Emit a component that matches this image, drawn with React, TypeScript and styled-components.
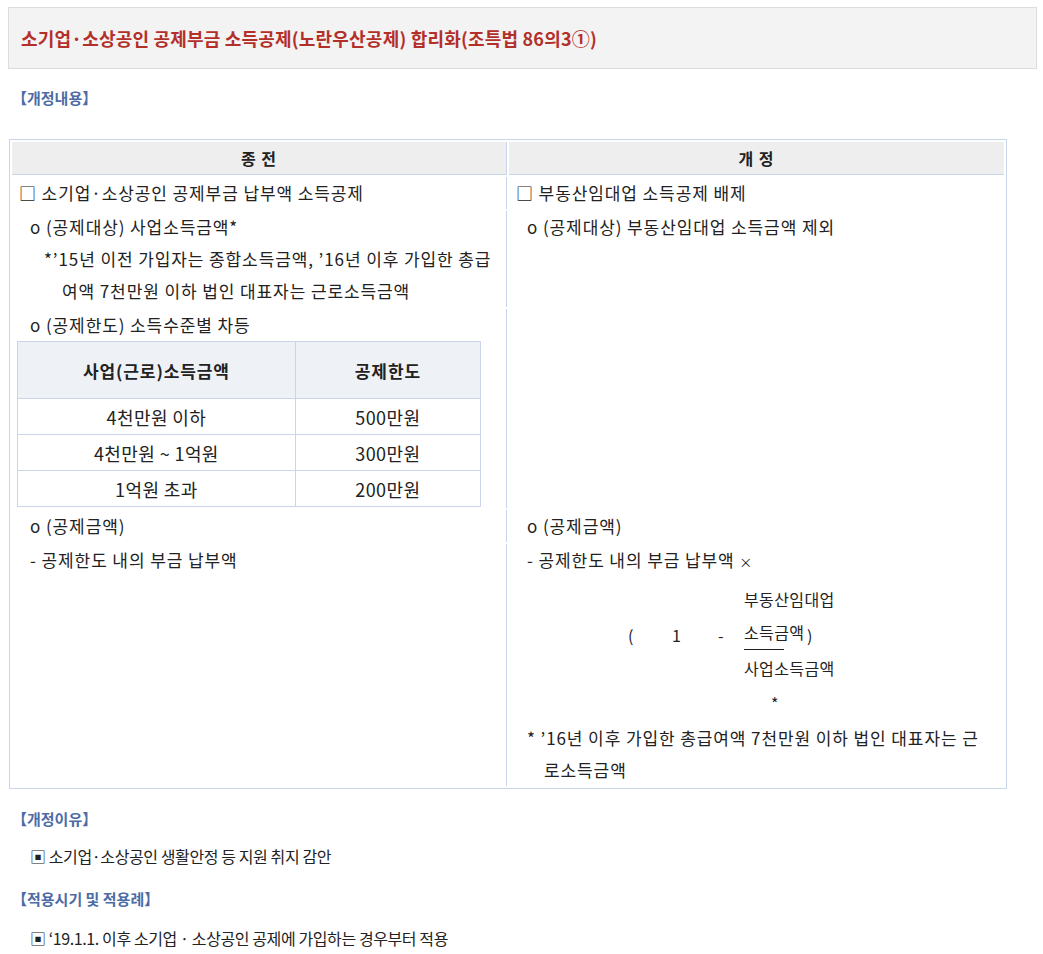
import styled, { createGlobalStyle } from "styled-components";

const GlobalStyle = createGlobalStyle`
  body {
    margin: 0;
    background: #fff;
    font-family: "Noto Sans CJK KR", "Noto Sans", sans-serif;
    color: #222;
    font-size: 16px;
  }
`;

const Page = styled.div`
  padding: 7px 6px 0 8px;
`;

const TitleBox = styled.div`
  display: flex;
  align-items: center;
  height: 60px;
  padding: 0 12px;
  background: #f3f3f3;
  border: 1px solid #dcdcdc;
  color: #b3302a;
  font-size: 18px;
  font-weight: 700;
  letter-spacing: 0.2px;
`;

const SectionLabel = styled.div<{ $top?: number }>`
  margin-top: ${(p) => p.$top ?? 14}px;
  padding-left: 4px;
  color: #4d6ca6;
  font-size: 15px;
  font-weight: 700;
  line-height: 30px;
`;

const Bullet = styled.div<{ $top?: number }>`
  padding-left: 22px;
  margin-top: ${(p) => p.$top ?? 6}px;
  line-height: 32px;
  letter-spacing: -0.4px;
`;

const CompareTable = styled.table`
  margin: 26px 0 0 1px;
  width: 998px;
  border: 1px solid #c9d5e8;
  border-collapse: separate;
  border-spacing: 2px;
  table-layout: fixed;
`;

const HeadCell = styled.th<{ $left?: boolean }>`
  height: 32px;
  padding: 0;
  background: #eeeeee;
  border-bottom: 1px solid #c9d5e8;
  border-right: ${(p) => (p.$left ? "1px solid #c9d5e8" : "none")};
  font-size: 16px;
  font-weight: 700;
  text-align: center;
  letter-spacing: 1px;
`;

const Cell = styled.td<{ $left?: boolean }>`
  padding: 0 0 0 7px;
  vertical-align: top;
  border-right: ${(p) => (p.$left ? "1px solid #c9d5e8" : "none")};
  font-size: 17px;
  letter-spacing: 0.9px;
`;

const Line = styled.div<{ $indent?: number }>`
  padding-left: ${(p) => p.$indent ?? 0}px;
  line-height: 32px;
  white-space: nowrap;
`;

const Wrapped = styled.div<{ $indent: number; $hang: number; $top?: number; $right?: number }>`
  margin-top: ${(p) => p.$top ?? 0}px;
  padding-left: ${(p) => p.$indent + p.$hang}px;
  padding-right: ${(p) => p.$right ?? 4}px;
  text-indent: -${(p) => p.$hang}px;
  line-height: 32px;
`;

const Times = styled.span`
  font-size: 13px;
`;

const LimitTable = styled.table`
  margin: 0 0 1px -2px;
  width: 464px;
  border-collapse: collapse;
  text-align: center;
  letter-spacing: 0.4px;
`;

const LimitHead = styled.th<{ $wide?: boolean }>`
  width: ${(p) => (p.$wide ? "60%" : "auto")};
  height: 54px;
  background: #eef2f7;
  border: 1px solid #c9d5e8;
  font-size: 17px;
  font-weight: 700;
  letter-spacing: 0.9px;
`;

const LimitCell = styled.td`
  height: 35px;
  padding: 0;
  border: 1px solid #c9d5e8;
  font-size: 18px;
`;

const Formula = styled.div`
  display: grid;
  grid-template-columns: 44px 46px 26px 63px auto;
  align-items: center;
  margin: 5px 0 0 112px;
  font-size: 16px;
  letter-spacing: 0.4px;
`;

const Fraction = styled.div`
  width: 40px;
  white-space: nowrap;
`;

const Numerator = styled.div`
  line-height: 33px;
  border-bottom: 1px solid #222;
`;

const Denominator = styled.div`
  line-height: 36px;
`;

const Star = styled.div`
  padding-left: 255px;
  line-height: 34px;
  font-size: 16px;
`;

const rows = [
  ["4천만원 이하", "500만원"],
  ["4천만원 ~ 1억원", "300만원"],
  ["1억원 초과", "200만원"],
];

export default function App() {
  return (
    <Page>
      <GlobalStyle />
      <TitleBox>
        소기업·소상공인 공제부금 소득공제(노란우산공제) 합리화(조특법 86의3①)
      </TitleBox>

      <SectionLabel $top={14}>【개정내용】</SectionLabel>

      <CompareTable>
        <colgroup>
          <col style={{ width: "50%" }} />
          <col style={{ width: "50%" }} />
        </colgroup>
        <thead>
          <tr>
            <HeadCell $left>종 전</HeadCell>
            <HeadCell>개 정</HeadCell>
          </tr>
        </thead>
        <tbody>
          <tr>
            <Cell $left>
              <Line>□ 소기업·소상공인 공제부금 납부액 소득공제</Line>
            </Cell>
            <Cell>
              <Line>□ 부동산임대업 소득공제 배제</Line>
            </Cell>
          </tr>
          <tr>
            <Cell $left>
              <Line $indent={11}>o (공제대상) 사업소득금액*</Line>
              <Wrapped $indent={25} $hang={18}>
                *’15년 이전 가입자는 종합소득금액, ’16년 이후 가입한 총급여액 7천만원 이하 법인 대표자는 근로소득금액
              </Wrapped>
            </Cell>
            <Cell>
              <Line $indent={11}>o (공제대상) 부동산임대업 소득금액 제외</Line>
            </Cell>
          </tr>
          <tr>
            <Cell $left>
              <Line $indent={11}>o (공제한도) 소득수준별 차등</Line>
              <LimitTable>
                <thead>
                  <tr>
                    <LimitHead $wide>사업(근로)소득금액</LimitHead>
                    <LimitHead>공제한도</LimitHead>
                  </tr>
                </thead>
                <tbody>
                  {rows.map(([a, b]) => (
                    <tr key={a}>
                      <LimitCell>{a}</LimitCell>
                      <LimitCell>{b}</LimitCell>
                    </tr>
                  ))}
                </tbody>
              </LimitTable>
            </Cell>
            <Cell />
          </tr>
          <tr>
            <Cell $left>
              <Line $indent={11}>o (공제금액)</Line>
            </Cell>
            <Cell>
              <Line $indent={11}>o (공제금액)</Line>
            </Cell>
          </tr>
          <tr>
            <Cell $left>
              <Line $indent={11}>- 공제한도 내의 부금 납부액</Line>
            </Cell>
            <Cell>
              <Line $indent={11}>
                - 공제한도 내의 부금 납부액 <Times>×</Times>
              </Line>
              <Formula>
                <span>(</span>
                <span>1</span>
                <span>-</span>
                <Fraction>
                  <Numerator>
                    부동산임대업
                    <br />
                    소득금액
                  </Numerator>
                  <Denominator>사업소득금액</Denominator>
                </Fraction>
                <span>)</span>
              </Formula>
              <Star>*</Star>
              <Wrapped $indent={11} $hang={17} $top={2} $right={13}>
                * ’16년 이후 가입한 총급여액 7천만원 이하 법인 대표자는 근로소득금액
              </Wrapped>
            </Cell>
          </tr>
        </tbody>
      </CompareTable>

      <SectionLabel $top={15}>【개정이유】</SectionLabel>
      <Bullet>▣ 소기업·소상공인 생활안정 등 지원 취지 감안</Bullet>
      <SectionLabel $top={12}>【적용시기 및 적용례】</SectionLabel>
      <Bullet $top={8}>▣ ‘19.1.1. 이후 소기업 · 소상공인 공제에 가입하는 경우부터 적용</Bullet>
    </Page>
  );
}
